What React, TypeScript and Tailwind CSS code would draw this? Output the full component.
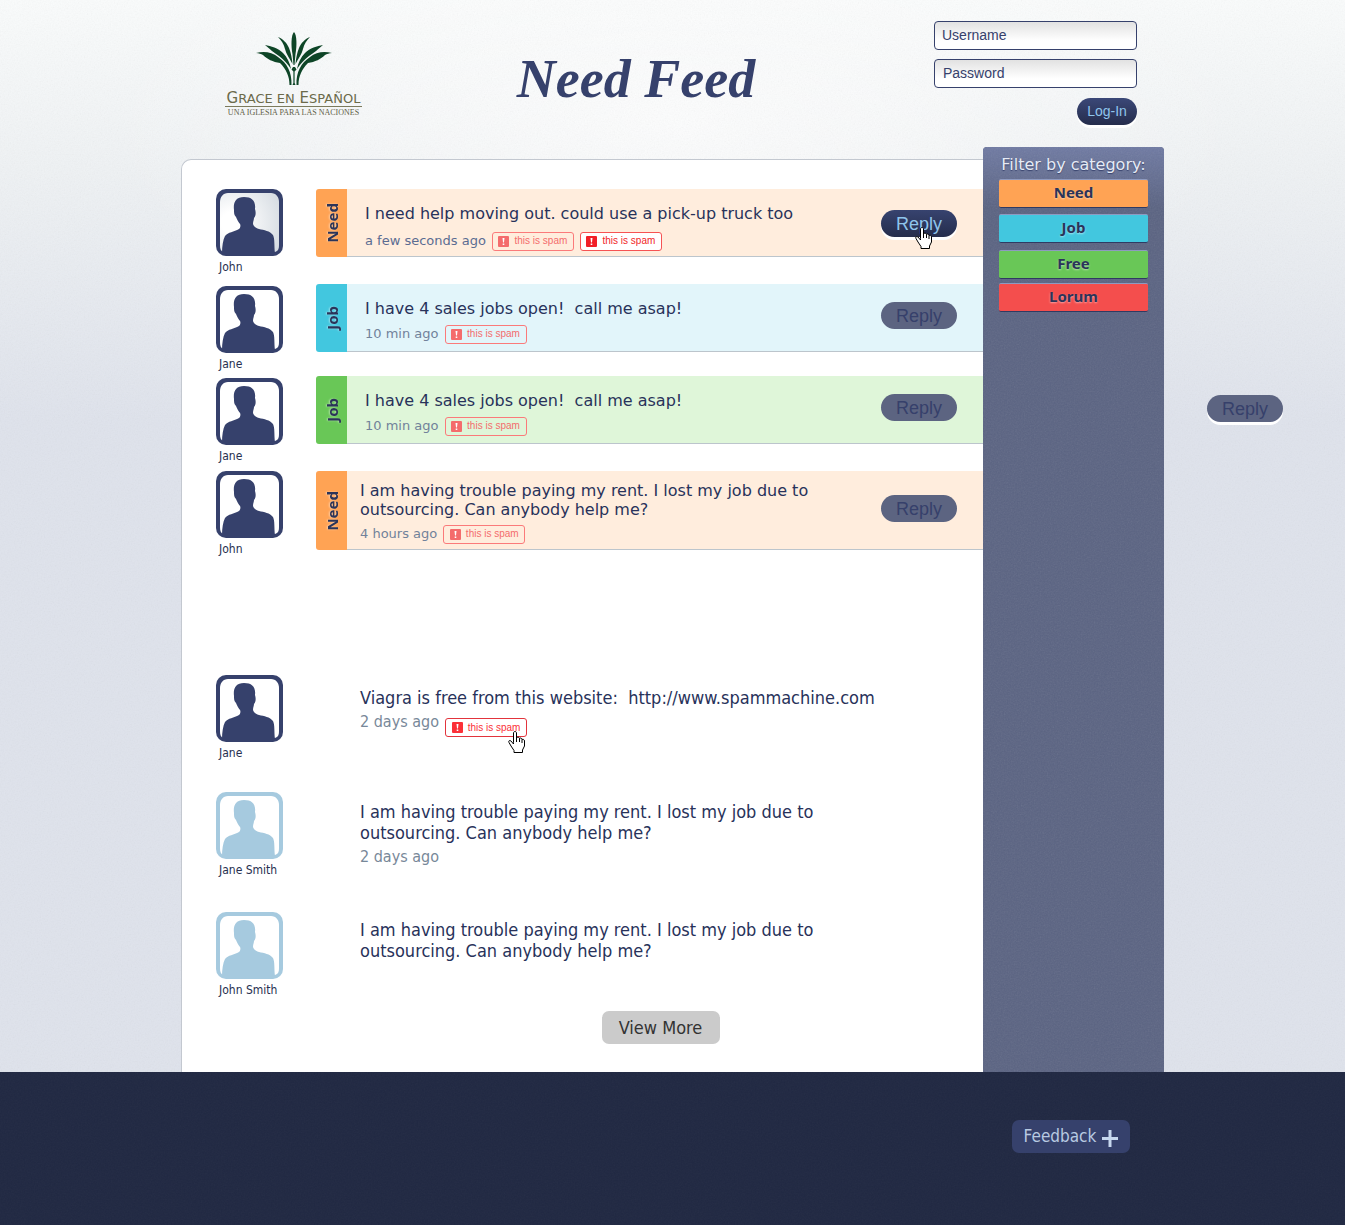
import { ReactNode } from "react";

function Grain({ id, opacity }: { id: string; opacity: string }) {
  return (
    <svg aria-hidden="true" className={"pointer-events-none absolute inset-0 h-full w-full " + opacity}>
      <filter id={id}>
        <feTurbulence type="fractalNoise" baseFrequency="0.7" numOctaves="2" stitchTiles="stitch" />
        <feColorMatrix type="saturate" values="0" />
      </filter>
      <rect width="100%" height="100%" filter={"url(#" + id + ")"} />
    </svg>
  );
}

function Fronds() {
  return (
    <g>
      <path d="M22 5C27 7 31 11 33 16C35 21 36 26 36.500 32C34 27 30 22 29 17C28 12 25 8 22 5Z" />
      <path d="M9 13C15 14 22 16 27 21C31 25 34 31 35 37C32 32 28 28 23 24C18 21 14 17 9 13Z" />
      <path d="M0 21C8 19 16 20 22 25C31 31 36 40 35.500 53H33.500C33.500 44 30 37 24 31C17 30 11 27 7 23C5 22 3 21 0 21Z" />
    </g>
  );
}

function Logo() {
  return (
    <a href="#home" aria-label="Grace en Español" className="flex w-[137px] flex-col items-center pt-8">
      <svg viewBox="0 0 76 54" className="h-[54px] w-[76px]" fill="#0e4527" aria-hidden="true">
        <path d="M38 0C35 3 35 14 36.500 22L37.500 33H38.500L39.500 22C41 14 41 3 38 0Z" />
        <Fronds />
        <g transform="matrix(-1 0 0 1 76 0)">
          <Fronds />
        </g>
        <path d="M37 35H39L40.500 37.500L38.600 39.500V51L39.500 53H36.500L37.400 51V39.500L35.500 37.500Z" />
      </svg>
      <span className="mt-[5px] w-full border-b border-[#7b7a5c] text-center font-['DejaVu_Sans',sans-serif] text-[15px] leading-[14px] whitespace-nowrap text-[#6b6a4a]">
        G<span className="text-[13px]">RACE EN</span> E<span className="text-[13px]">SPAÑOL</span>
      </span>
      <span className="font-['Liberation_Serif',serif] text-[8px] leading-[11px] whitespace-nowrap text-[#5f5e48]">UNA IGLESIA PARA LAS NACIONES</span>
    </a>
  );
}

function Avatar({ name, tone, shaded }: { name: string; tone: string; shaded?: boolean }) {
  return (
    <figure className={"w-[67px] shrink-0 " + tone}>
      <div className="h-[67px] overflow-hidden rounded-[10px] bg-current">
        <svg viewBox="0 0 67 67" className="h-full w-full" fill="currentColor" aria-hidden="true">
          <defs>
            <radialGradient id="avatar-shade" cx="0.2" cy="0.5" r="0.9">
              <stop offset="0.2" stopColor="#ffffff" />
              <stop offset="1" stopColor="#d6dce2" />
            </radialGradient>
          </defs>
          <path d="M12 4H55C60 4 63 8 63 13V56C63 60 62 62 59 63H7C5 62 4 60 4 56V13C4 8 7 4 12 4Z" fill={shaded ? "url(#avatar-shade)" : "white"} />
          <path d="M6 64C6 57 7 51 9 47C12 43 18 43 23 40C24 39 25 37 24 35C22 33 21 30 20 28C18 26 18 24 18 21C17 13 20 8 28 8C36 8 40 12 39 20C40 23 40 27 38 29C38 31 37 32 37 35C38 38 40 39 43 40C48 41 54 42 57 46C59 50 58 57 59 64Z" />
        </svg>
      </div>
      <figcaption className="ml-[3px] pt-[3px] font-['DejaVu_Sans_Condensed','DejaVu_Sans',sans-serif] text-[12px] leading-4 whitespace-nowrap text-[#27304f]">{name}</figcaption>
    </figure>
  );
}

function Spam({ look = "soft" }: { look?: "soft" | "solid" | "hover" }) {
  const styles = {
    soft: "border-[#fb7a7a] text-[#f46c6c]",
    solid: "border-[#f65353] bg-white text-[#f11f27]",
    hover: "border-[#e2343c] bg-white text-[#fb3038]",
  };
  return (
    <button type="button" className={"flex h-[19px] w-[82px] shrink-0 items-center justify-center gap-[5px] rounded-[3px] border font-['Liberation_Sans',sans-serif] text-[10px] leading-3 whitespace-nowrap " + styles[look]}>
      <svg viewBox="0 0 11 11" className="h-[11px] w-[11px] shrink-0" aria-hidden="true">
        <rect width="11" height="11" rx="1" fill="currentColor" />
        <path d="M4.500 2H6.500L6 6.500H5ZM4.700 7.500H6.300V9H4.700Z" fill="white" />
      </svg>
      this is spam
    </button>
  );
}

function Pointer() {
  return (
    <svg viewBox="0 0 17 22" className="pointer-events-none h-[22px] w-[17px]" aria-hidden="true">
      <path d="M5.500 11.500V2C5.500 0 8.500 0 8.500 2V7C9 5.500 11.500 6 11.500 7.500C12 6.500 14 7 14 8.500C15 8 16.500 8.500 16.500 10V15L14.500 19V21.500H6V19.500L3 15L1 11.500C0 9.500 2 9 3 10L5.500 13Z" fill="white" stroke="black" strokeWidth="1" />
      <path d="M8.500 7V11M11.500 7.500V11M14 8.500V12" stroke="black" />
    </svg>
  );
}

function Reply({ active }: { active?: boolean }) {
  return (
    <button
      type="button"
      className={
        "block h-[27px] w-[76px] rounded-full text-center font-['Liberation_Sans',sans-serif] text-[18px] leading-6 " +
        (active ? "bg-linear-to-b from-[#37436f] to-[#252d4c] text-[#8fc5ec] shadow-[0_3px_0_white]" : "bg-[#5c6481] text-[#36406b]")
      }
    >
      Reply
    </button>
  );
}

type RowProps = {
  name: string;
  label: string;
  bar: string;
  fill: string;
  time: string;
  rowHeight: string;
  height: string;
  textPad: string;
  metaGap: string;
  replyPad: string;
  avatarTop?: string;
  active?: boolean;
  children: ReactNode;
};

function Row({ name, label, bar, fill, time, rowHeight, height, textPad, metaGap, replyPad, avatarTop = "", active, children }: RowProps) {
  return (
    <article className={"flex items-start " + rowHeight}>
      <div className={"w-[100px] shrink-0 " + avatarTop}>
        <Avatar name={name} tone="text-[#36416c]" shaded={active} />
      </div>
      <div className={"flex min-w-0 flex-1 " + height}>
        <div className={"flex w-[31px] shrink-0 items-center justify-center rounded-l-[3px] " + bar}>
          <span className="rotate-180 font-['Noto_Sans',sans-serif] text-[15px] leading-5 font-bold text-[#2b3459] [text-shadow:0_-1px_2px_#ffffff80] [writing-mode:vertical-rl]">{label}</span>
        </div>
        <div className={"flex min-w-0 flex-1 items-start border-b border-[#bcc5cc] pr-[26px] " + fill}>
          <div className={"min-w-0 flex-1 font-['DejaVu_Sans',sans-serif] " + textPad}>
            <p className="text-[16px] leading-[19px] whitespace-pre-wrap text-[#28325a]">{children}</p>
            <div className={"flex items-center gap-[6px] text-[13px] leading-5 text-[#71829a] " + metaGap}>
              <time className={active ? "text-[#5b6c92]" : ""}>{time}</time>
              <Spam />
              {active && <Spam look="solid" />}
            </div>
          </div>
          <div className={"shrink-0 " + replyPad}>
            <div className="relative">
              <Reply active={active} />
              {active && <div className="absolute top-[17px] left-[34px]"><Pointer /></div>}
            </div>
          </div>
        </div>
      </div>
    </article>
  );
}

function Plain({ name, tone, time, height, spam, textTop, children }: { name: string; tone: string; time?: string; height: string; spam?: boolean; textTop: string; children: ReactNode }) {
  return (
    <article className={"flex items-start " + height}>
      <Avatar name={name} tone={tone} />
      <div className={"ml-[77px] min-w-0 font-['DejaVu_Sans_Condensed','DejaVu_Sans',sans-serif] " + textTop}>
        <p className="text-[18px] leading-[21px] whitespace-pre-wrap text-[#28325a]">{children}</p>
        {time && (
          <div className="flex items-start gap-[6px] pt-1 text-[16px] leading-5 text-[#788899]">
            <time>{time}</time>
            {spam && (
              <div className="relative pt-[6px]">
                <Spam look="hover" />
                <div className="absolute top-[19px] left-[63px]"><Pointer /></div>
              </div>
            )}
          </div>
        )}
      </div>
    </article>
  );
}

const filters = [
  { label: "Need", look: "mb-[6px] bg-[#ffa354]" },
  { label: "Job", look: "mb-[7px] bg-[#42c7df]" },
  { label: "Free", look: "mb-1 bg-[#69c757]" },
  { label: "Lorum", look: "bg-[#f44e4d]" },
];

const shortRow = { height: "h-[68px]", textPad: "pt-[15px] pl-[18px]", metaGap: "mt-[6px]", replyPad: "pt-[18px]" };

export default function App() {
  return (
    <div className="relative overflow-hidden bg-[#dfe3ec]">
      <div className="absolute inset-x-0 top-0 h-[420px] bg-linear-to-b from-[#fafcfc] via-[#eff2f4] via-40% to-[#dfe3ec]" />
      <div className="absolute inset-x-0 top-0 h-[400px] bg-radial-[at_50%_30%] from-white/80 to-transparent to-60%" />
      <Grain id="page-grain" opacity="opacity-[0.09]" />
      <div className="relative mx-auto max-w-[983px]">
        <header className="flex h-[147px] items-start justify-between pr-[27px] pl-11">
          <Logo />
          <h1 className="pt-[46px] pr-6 font-['Liberation_Serif',serif] text-[54px] leading-[66px] font-bold whitespace-nowrap text-[#36416c] italic">Need Feed</h1>
          <form className="flex w-[203px] flex-col pt-[21px] font-['Liberation_Sans',sans-serif] text-[14px]" onSubmit={(e) => e.preventDefault()}>
            <input aria-label="Username" placeholder="Username" className="mb-[9px] h-[29px] w-full rounded-[4px] border border-[#36416c] bg-linear-to-b from-[#e2e2e2] to-white to-70% px-[7px] pb-[2px] placeholder:text-[#36416c]" />
            <input aria-label="Password" type="password" placeholder="Password" className="mb-[10px] h-[29px] w-full rounded-[4px] border border-[#36416c] bg-linear-to-b from-[#e2e2e2] to-white to-70% px-2 pb-[2px] placeholder:text-[#36416c]" />
            <button type="submit" className="h-[27px] w-[60px] self-end rounded-full bg-linear-to-b from-[#3b4878] to-[#252d4c] text-[#8fc5ec] shadow-[0_3px_0_white]">Log-In</button>
          </form>
        </header>
        <div className="flex">
          <main className="mt-3 min-w-0 flex-1 rounded-tl-[10px] border-t border-l border-[#c3c8d0] bg-white pt-[29px] pl-[34px]">
            <Row name="John" label="Need" bar="bg-[#ffa354]" fill="bg-[#ffeddd]" time="a few seconds ago" rowHeight="h-[95px]" {...shortRow} metaGap="mt-2" replyPad="pt-[21px]" active>
              I need help moving out. could use a pick-up truck too
            </Row>
            <Row name="Jane" label="Job" bar="bg-[#42c7df]" fill="bg-[#e2f5fa]" time="10 min ago" rowHeight="h-[92px]" {...shortRow} avatarTop="pt-[2px]">
              {"I have 4 sales jobs open!  call me asap!"}
            </Row>
            <Row name="Jane" label="Job" bar="bg-[#69c757]" fill="bg-[#dff6d9]" time="10 min ago" rowHeight="h-[95px]" {...shortRow} avatarTop="pt-[2px]">
              {"I have 4 sales jobs open!  call me asap!"}
            </Row>
            <Row name="John" label="Need" bar="bg-[#ffa354]" fill="bg-[#ffeddd]" time="4 hours ago" rowHeight="h-[204px]" height="h-[79px]" textPad="pt-[10px] pl-[13px]" metaGap="mt-[5px]" replyPad="pt-6">
              {"I am having trouble paying my rent. I lost my job due to\noutsourcing. Can anybody help me?"}
            </Row>
            <Plain name="Jane" tone="text-[#36416c]" time="2 days ago" height="h-[117px]" spam textTop="pt-3">
              {"Viagra is free from this website:  http://www.spammachine.com"}
            </Plain>
            <Plain name="Jane Smith" tone="text-[#a6cadf]" time="2 days ago" height="h-[120px]" textTop="pt-[9px]">
              {"I am having trouble paying my rent. I lost my job due to\noutsourcing. Can anybody help me?"}
            </Plain>
            <Plain name="John Smith" tone="text-[#a6cadf]" height="h-[99px]" textTop="pt-[7px]">
              {"I am having trouble paying my rent. I lost my job due to\noutsourcing. Can anybody help me?"}
            </Plain>
            <div className="flex justify-center pb-7 pl-[122px]">
              <button type="button" className="h-[33px] w-[118px] rounded-[7px] bg-[#cbcbcb] font-['DejaVu_Sans_Condensed','DejaVu_Sans',sans-serif] text-[18px] text-[#333]">View More</button>
            </div>
          </main>
          <aside className="relative w-[181px] shrink-0 overflow-hidden rounded-t-[4px] bg-[#5a6382]">
            <div className="absolute inset-x-0 top-0 h-[60px] bg-linear-to-b from-[#6f7aa3] to-[#5a6382]" />
            <Grain id="rail-grain" opacity="opacity-[0.12]" />
            <div className="relative flex flex-col px-4 pt-2">
              <h2 className="mb-[5px] text-center font-['DejaVu_Sans',sans-serif] text-[16px] leading-[19px] whitespace-nowrap text-[#e6ebf5] [text-shadow:0_1px_1px_#36416c]">Filter by category:</h2>
              {filters.map((f) => (
                <button key={f.label} type="button" className={"h-[29px] rounded-[2px] border-t border-b border-t-[#8e9ac0] border-b-[#303a62] pb-1 font-['Noto_Sans',sans-serif] text-[15px] leading-5 font-bold text-[#2b3459] [text-shadow:0_1px_2px_#ffffff80] " + f.look}>
                  {f.label}
                </button>
              ))}
            </div>
          </aside>
        </div>
        <div className="absolute top-[395px] -right-[119px] rounded-full shadow-[0_3px_0_white]">
          <Reply />
        </div>
      </div>
      <footer className="relative h-[153px] bg-[#202842]">
        <Grain id="footer-grain" opacity="opacity-[0.04]" />
        <div className="relative mx-auto flex max-w-[983px] justify-end pt-12 pr-[34px]">
          <button type="button" className="flex h-[33px] w-[118px] items-center justify-center gap-[6px] rounded-[7px] bg-[#36416c] font-['DejaVu_Sans_Condensed','DejaVu_Sans',sans-serif] text-[17px] text-[#b8cae2]">
            Feedback
            <svg viewBox="0 0 16 17" className="mt-1 h-[17px] w-4" aria-hidden="true"><path d="M8 0V17M0 8.500H16" stroke="#c7d8ee" strokeWidth="3" /></svg>
          </button>
        </div>
      </footer>
    </div>
  );
}
